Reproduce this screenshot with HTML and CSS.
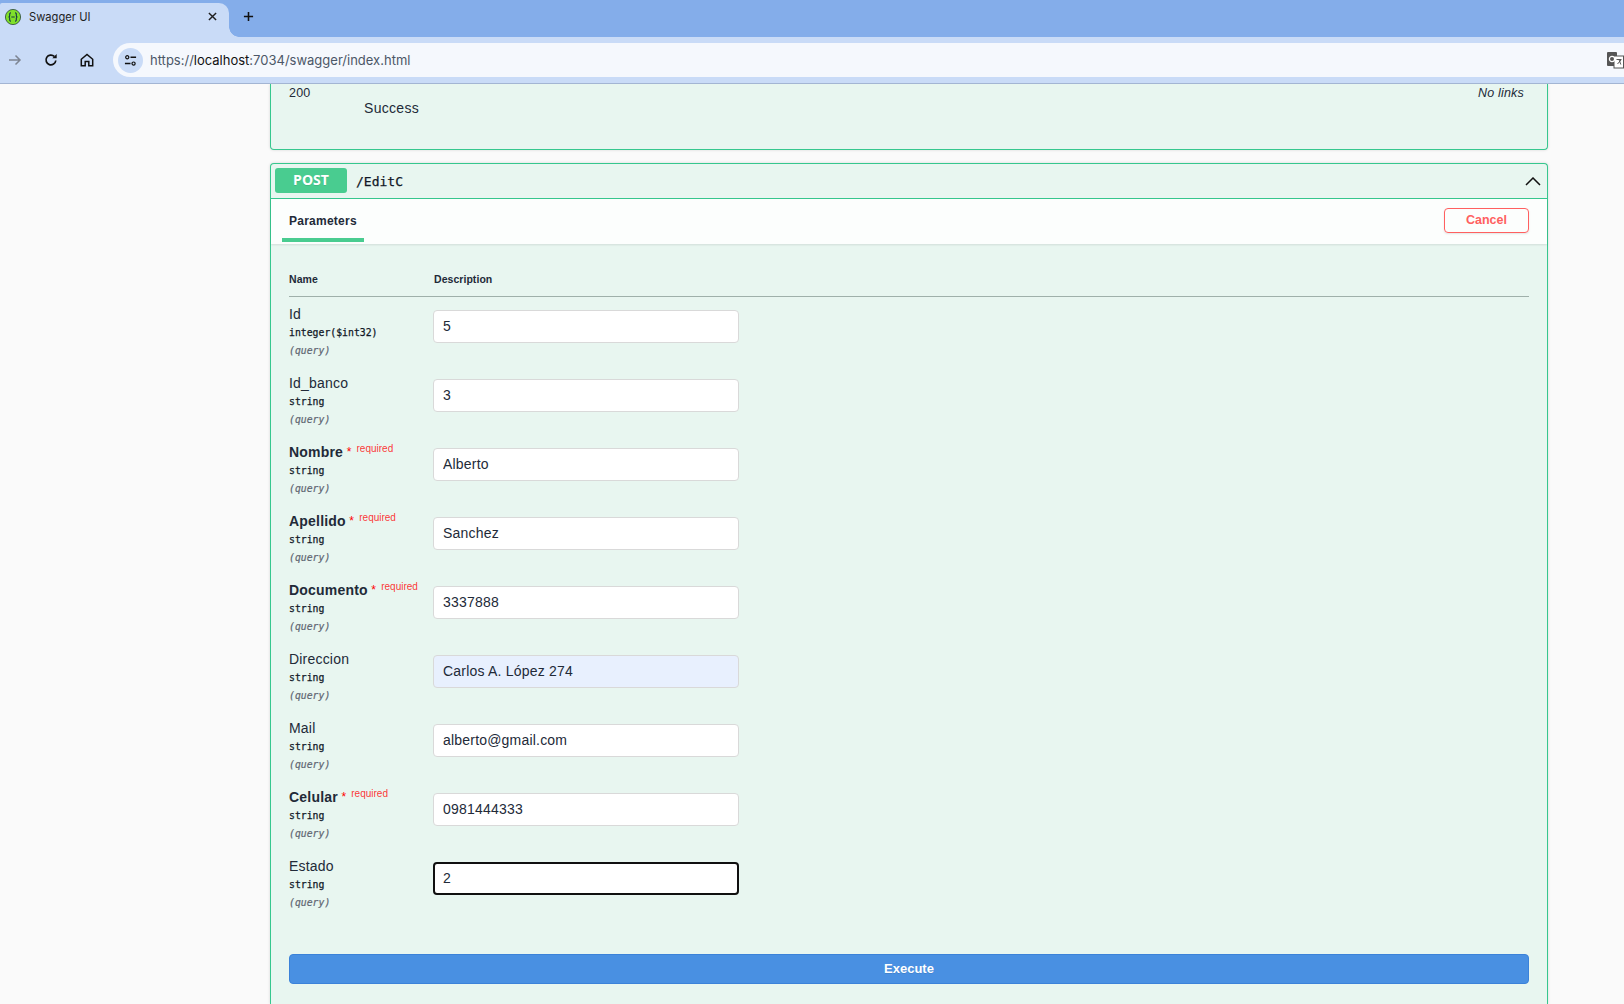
FILE: index.html
```html
<!DOCTYPE html>
<html lang="en">
<head>
<meta charset="utf-8">
<title>Swagger UI</title>
<link rel="stylesheet" href="styles.css">
</head>
<body>
<header class="chrome">
  <div class="tabstrip">
    <div class="tab">
      <svg class="favicon" viewBox="0 0 16 16"><circle cx="8" cy="8" r="7.600" fill="#7fe02a" stroke="#2c4a33" stroke-width=".8"/><path d="M6 3.800c-1.600 0-1.300 1.300-1.300 2.600 0 1-.6 1.500-1.100 1.600.5.1 1.100.6 1.100 1.600 0 1.300-.3 2.600 1.300 2.600M10 3.800c1.600 0 1.300 1.300 1.300 2.600 0 1 .6 1.500 1.100 1.600-.5.1-1.100.6-1.100 1.600 0 1.300.3 2.600-1.300 2.600M6.300 8h3.400" fill="none" stroke="#173647" stroke-width="1.100"/></svg>
      <span class="tab-title">Swagger UI</span>
      <svg class="tab-close" viewBox="0 0 10 10"><path d="M1 1l8 8M9 1l-8 8" stroke="#1f1f1f" stroke-width="1.600"/></svg>
    </div>
    <svg class="new-tab" viewBox="0 0 12 12"><path d="M6 1v10M1 6h10" stroke="#111" stroke-width="1.700"/></svg>
  </div>
  <div class="toolbar">
    <svg class="tool tool-forward" viewBox="0 0 14 14"><path d="M1 7h11M7.500 2.500L12 7l-4.500 4.500" fill="none" stroke="#7d8593" stroke-width="1.500"/></svg>
    <svg class="tool tool-reload" viewBox="0 0 14 14"><path d="M11.800 7.500A4.900 4.900 0 1 1 10.300 3.400" fill="none" stroke="#111" stroke-width="1.700"/><path d="M8.300 5.300h4.400V.9z" fill="#111"/></svg>
    <svg class="tool tool-home" viewBox="0 0 14 14"><path d="M1.300 6.300L7 1.400l5.700 4.900v6.400H8.800V8.400H5.200v4.300H1.300z" fill="none" stroke="#111" stroke-width="1.500"/></svg>
    <div class="omnibox">
      <span class="site-chip">
        <svg viewBox="0 0 14 14" class="site-icon"><circle cx="3.500" cy="3.500" r="1.700" fill="none" stroke="#111" stroke-width="1.300"/><path d="M7 3.500h6M1 10.300h6" stroke="#111" stroke-width="1.500"/><circle cx="10.300" cy="10.300" r="1.700" fill="none" stroke="#111" stroke-width="1.300"/></svg>
      </span>
      <span class="url"><span class="url-dim">https://</span><span class="url-host">localhost</span><span class="url-dim">:7034/swagger/index.html</span></span>
      <svg class="translate" viewBox="0 0 17 17"><rect x="0" y="0" width="10" height="14" rx="1" fill="#555"/><rect x="7" y="4" width="9.500" height="12" fill="#fff" stroke="#555"/><circle cx="5" cy="7" r="2.600" fill="none" stroke="#fff" stroke-width="1.200"/><path d="M9.500 7.500h5M12 7.500l1.800 5M14 8l-3.500 4" stroke="#444" stroke-width=".9" fill="none"/></svg>
    </div>
  </div>
</header>

<main class="page">
  <section class="card card-cut">
    <div class="resp-row">
      <div class="resp-code">200</div>
      <div class="resp-desc">Success</div>
      <div class="resp-links">No links</div>
    </div>
  </section>

  <section class="card card-open">
    <div class="op-head">
      <span class="method">POST</span>
      <span class="op-path">/EditC</span>
      <svg class="chevron" viewBox="0 0 16 9"><path d="M1 8l7-7 7 7" fill="none" stroke="#111" stroke-width="1.500"/></svg>
    </div>
    <div class="tabbar">
      <div class="params-tab">Parameters</div>
      <button class="cancel" type="button">Cancel</button>
    </div>
    <div class="params-body">
      <div class="col-heads"><span class="col-name">Name</span><span>Description</span></div>

      <div class="param">
        <div class="param-info"><div class="p-name">Id</div><div class="p-type">integer($int32)</div><div class="p-in">(query)</div></div>
        <input class="p-input" value="5">
      </div>
      <div class="param">
        <div class="param-info"><div class="p-name">Id_banco</div><div class="p-type">string</div><div class="p-in">(query)</div></div>
        <input class="p-input" value="3">
      </div>
      <div class="param">
        <div class="param-info"><div class="p-name p-req">Nombre<span class="star">&nbsp;*</span><span class="req">required</span></div><div class="p-type">string</div><div class="p-in">(query)</div></div>
        <input class="p-input" value="Alberto">
      </div>
      <div class="param">
        <div class="param-info"><div class="p-name p-req">Apellido<span class="star">&nbsp;*</span><span class="req">required</span></div><div class="p-type">string</div><div class="p-in">(query)</div></div>
        <input class="p-input" value="Sanchez">
      </div>
      <div class="param">
        <div class="param-info"><div class="p-name p-req">Documento<span class="star">&nbsp;*</span><span class="req">required</span></div><div class="p-type">string</div><div class="p-in">(query)</div></div>
        <input class="p-input" value="3337888">
      </div>
      <div class="param">
        <div class="param-info"><div class="p-name">Direccion</div><div class="p-type">string</div><div class="p-in">(query)</div></div>
        <input class="p-input p-autofill" value="Carlos A. López 274">
      </div>
      <div class="param">
        <div class="param-info"><div class="p-name">Mail</div><div class="p-type">string</div><div class="p-in">(query)</div></div>
        <input class="p-input" value="alberto@gmail.com">
      </div>
      <div class="param">
        <div class="param-info"><div class="p-name p-req">Celular<span class="star">&nbsp;*</span><span class="req">required</span></div><div class="p-type">string</div><div class="p-in">(query)</div></div>
        <input class="p-input" value="0981444333">
      </div>
      <div class="param">
        <div class="param-info"><div class="p-name">Estado</div><div class="p-type">string</div><div class="p-in">(query)</div></div>
        <input class="p-input p-focus" value="2">
      </div>

      <button class="execute" type="button">Execute</button>
    </div>
  </section>
</main>
</body>
</html>
```

FILE: styles.css
```css
* { box-sizing: border-box; }
html, body { margin: 0; height: 100%; overflow: hidden; }
body { width: 1624px; height: 1004px; background: #fafafa; font-family: "Liberation Sans", Arial, sans-serif; color: #3b4151; display: flex; flex-direction: column; }

.chrome { height: 84px; flex: none; background: #c9dbf7; border-bottom: 1px solid #a3b5d3; }
.tabstrip { height: 37px; background: #84adea; display: flex; align-items: flex-start; }
.tab { width: 229px; height: 34px; margin-top: 3px; background: #c9dbf7; border-radius: 2px 10px 0 0; display: flex; align-items: center; padding: 0 0 7px 5px; position: relative; }
.tab::after { content: ""; position: absolute; right: -10px; bottom: 0; width: 10px; height: 10px; background: radial-gradient(circle at 100% 0, transparent 9.500px, #c9dbf7 10px); }
.favicon { width: 16px; height: 16px; flex: none; }
.tab-title { margin-left: 8px; font: 11.200px "Inter", "Liberation Sans", sans-serif; color: #1f1f1f; width: 181px; }
.tab-close { width: 9px; height: 9px; margin-left: -2px; flex: none; }
.new-tab { width: 11px; height: 11px; margin: 11px 0 0 14px; }
.toolbar { height: 46px; display: flex; align-items: center; }
.tool { flex: none; height: 14px; width: 14px; }
.tool-forward { margin-left: 8px; }
.tool-reload { margin-left: 22px; }
.tool-home { margin-left: 22px; }
.omnibox { margin-left: 19px; flex: 1; height: 34px; background: #f5f8fd; border-radius: 17px 0 0 17px; display: flex; align-items: center; padding-left: 4px; }
.site-chip { width: 25px; height: 25px; border-radius: 50%; background: #c9dbf7; display: flex; align-items: center; justify-content: center; margin-left: 1px; }
.site-icon { width: 13px; height: 13px; }
.url { margin-left: 7px; font: 13px "Inter", "Liberation Sans", sans-serif; flex: 1; }
.url-dim { color: #4c5767; }
.url-host { color: #111; }
.translate { width: 17px; height: 17px; flex: none; }

.page { flex: 1; min-height: 0; padding: 0 76px 0 270px; display: flex; flex-direction: column; gap: 13px; overflow: hidden; }
.card { border: 1px solid #36c78e; background: #e8f6f0; box-shadow: 0 0 3px rgba(0,0,0,.15); border-radius: 4px; }
.card-cut { flex: none; height: 66px; border-top: none; border-radius: 0 0 4px 4px; }
.resp-row { display: grid; grid-template-columns: 75px 1fr auto; padding: 0 23px 0 18px; font-size: 12px; letter-spacing: .2px; color: #222a38; }
.resp-code { padding-top: 1px; line-height: 14px; margin-top: 1px; font-size: 12.500px; }
.resp-desc { font-size: 14px; padding-top: 16px; line-height: 16px; letter-spacing: .3px; }
.resp-links { font-style: italic; font-size: 12.500px; line-height: 14px; padding-top: 2px; }

.card-open { flex: 1; min-height: 0; border-bottom: none; border-radius: 4px 4px 0 0; }
.op-head { height: 35px; display: flex; align-items: center; padding: 0 5px 0 4px; border-bottom: 1px solid #36c78e; }
.method { width: 72px; height: 25px; background: #49cc90; color: #fff; border-radius: 3px; font-weight: 700; font-size: 14px; display: flex; align-items: center; justify-content: center; padding-bottom: 2px; text-shadow: 0 1px 0 rgba(0,0,0,.1); font-family: "Open Sans", "Liberation Sans", sans-serif; margin-top: -1px; }
.op-path { font-family: "DejaVu Sans Mono", monospace; font-size: 13px; color: #111827; -webkit-text-stroke: .25px #111827; margin-left: 9px; flex: 1; }
.chevron { width: 16px; height: 9px; margin-right: 1px; }

.tabbar { height: 45px; background: rgba(255,255,255,.85); box-shadow: 0 1px 2px rgba(0,0,0,.1); display: flex; justify-content: space-between; padding: 0 18px 0 11px; position: relative; }
.params-tab { width: 82px; height: 43px; border-bottom: 4px solid #49cc90; font-size: 12px; letter-spacing: .25px; font-weight: 700; color: #222a38; padding: 15px 0 0 7px; line-height: 15px; }
.cancel { width: 85px; height: 25px; margin-top: 9px; background: transparent; border: 1px solid #ff6060; border-radius: 4px; color: #ff6060; font: 700 12.500px "Liberation Sans", sans-serif; padding: 0 0 2px; box-shadow: 0 1px 2px rgba(0,0,0,.1); }

.params-body { padding: 0 18px; }
.col-heads { height: 53px; padding-top: 29px; border-bottom: 1px solid #9fb0aa; font-size: 10.500px; letter-spacing: .05px; font-weight: 700; color: #222a38; line-height: 13px; display: flex; }
.col-name { width: 145px; }
.param { display: flex; height: 69px; padding-top: 9px; }
.param-info { width: 144px; flex: none; }
.p-name { font-size: 14px; letter-spacing: .2px; line-height: 16px; height: 16px; color: #222a38; white-space: nowrap; }
.p-req { font-weight: 700; }
.star { color: #f00; font-weight: 400; font-size: 12px; position: relative; top: -1px; }
.req { color: rgba(255,0,0,.8); font-weight: 400; font-size: 10px; letter-spacing: 0; margin-left: 5px; position: relative; top: -5px; }
.p-type { font: 9.800px "DejaVu Sans Mono", monospace; color: #111827; -webkit-text-stroke: .25px #111827; line-height: 12px; margin-top: 5px; }
.p-in { font: italic 9.800px "DejaVu Sans Mono", monospace; color: #5f6672; -webkit-text-stroke: .2px #5f6672; line-height: 12px; margin-top: 6px; }
.p-input { width: 306px; height: 33px; flex: none; background: #fff; border: 1px solid #d9d9d9; border-radius: 4px; padding: 0 9px 2px; font: 14px "Liberation Sans", sans-serif; letter-spacing: .2px; color: #222a38; margin-top: 4px; outline: none; }
.p-autofill { background: #e8f0fe; }
.p-focus { border: 2px solid #101010; padding: 0 8px 2px; }
.execute { display: block; width: 100%; height: 30px; margin-top: 36px; padding-bottom: 3px; background: #4990e2; border: 1px solid #3b82d9; border-radius: 4px; color: #fff; font: 700 13px "Liberation Sans", sans-serif; text-shadow: 0 1px 0 rgba(0,0,0,.1); }
```
